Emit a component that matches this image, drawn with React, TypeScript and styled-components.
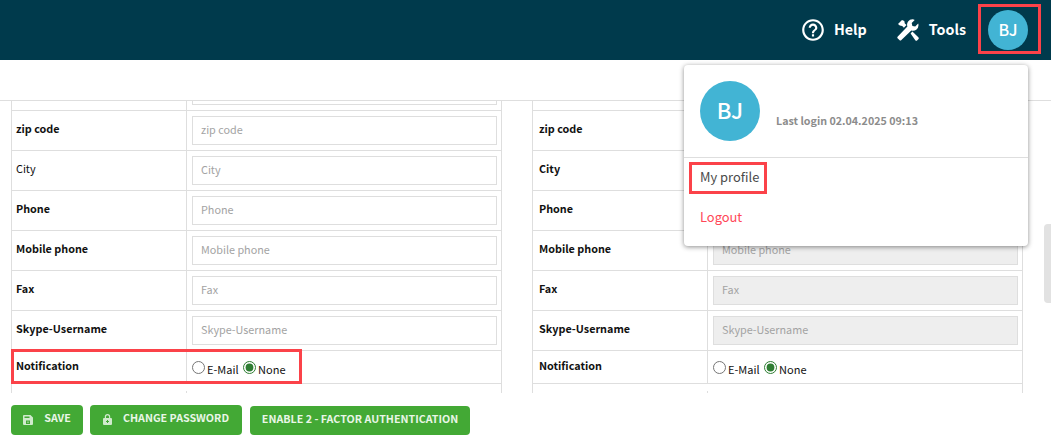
import React from 'react';
import styled, { createGlobalStyle } from 'styled-components';
import { MdHelpOutline } from 'react-icons/md';

const FONT = `"Noto Sans CJK JP", "Noto Sans", sans-serif`;

const Global = createGlobalStyle`
  html, body { margin: 0; padding: 0; background: #fff; }
  body { font-family: ${FONT}; color: #111; overflow: hidden; }
  * { box-sizing: border-box; }
`;

const Page = styled.div`
  position: relative;
  width: 1051px;
  height: 444px;
  display: flex;
  flex-direction: column;
  overflow: hidden;
`;

const Header = styled.header`
  height: 60px;
  flex: none;
  background: #003a4c;
  display: flex;
  align-items: center;
  justify-content: flex-end;
  padding-right: 23px;
`;

const NavItem = styled.a<{ $mr: number; $gap: number }>`
  display: flex;
  align-items: center;
  gap: ${p => p.$gap}px;
  margin-right: ${p => p.$mr}px;
  color: #fff;
  font-size: 14.3px;
  font-weight: 700;
  line-height: 20px;
  & > span { position: relative; top: -1px; }
`;

const Avatar = styled.div<{ $size: number; $font: number; $lift: number }>`
  width: ${p => p.$size}px;
  height: ${p => p.$size}px;
  flex: none;
  border-radius: 50%;
  background: #42b4d4;
  color: #fff;
  font-size: ${p => p.$font}px;
  font-weight: 500;
  padding-bottom: ${p => p.$lift}px;
  display: flex;
  align-items: center;
  justify-content: center;
`;

const SubBar = styled.div`
  height: 41px;
  flex: none;
  border-bottom: 1px solid #dedede;
`;

const Scroller = styled.div`
  height: 292px;
  flex: none;
  overflow: hidden;
  display: flex;
  padding-left: 11px;
`;

const Table = styled.div<{ $ml: number }>`
  width: 491px;
  margin-left: ${p => p.$ml}px;
  margin-top: -30px;
  flex: none;
  display: grid;
  grid-template-columns: 175px 1fr;
  grid-auto-rows: 40px;
  border-left: 1px solid #dedede;
  border-right: 1px solid #dedede;
  align-self: flex-start;
`;

const Label = styled.div<{ $bold?: boolean; $pad: number; $h: number; $inset: number }>`
  height: ${p => p.$h}px;
  border-bottom: 1px solid #dedede;
  border-right: 1px solid #dedede;
  padding: ${p => p.$pad}px 4px 0 ${p => p.$inset}px;
  font-size: 10.8px;
  line-height: 18px;
  font-weight: ${p => (p.$bold ? 700 : 400)};
  white-space: nowrap;
`;

const Cell = styled.div<{ $short?: boolean }>`
  height: ${p => (p.$short ? 33 : 40)}px;
  border-bottom: 1px solid #dedede;
  padding: 5px 4px 0 5px;
  display: flex;
  align-items: ${p => (p.$short ? 'center' : 'flex-start')};
`;

const Field = styled.input`
  width: 100%;
  height: 29px;
  border: 1px solid #dedede;
  background: #fff;
  padding: 0 7px 3px 8px;
  font-family: ${FONT};
  font-size: 10.8px;
  color: #111;
  outline: none;
  &::placeholder { color: #a3a3a3; opacity: 1; }
  &:disabled { background: #eeeeee; }
`;

const RadioGroup = styled.div`
  display: flex;
  align-items: center;
  font-size: 11px;
  line-height: 18px;
  padding-bottom: 1px;
`;

const RadioLabel = styled.label`
  display: flex;
  align-items: center;
  margin-right: 4.5px;
`;

const Radio = styled.input`
  width: 13px;
  height: 13px;
  margin: 0 2px 3px 0;
  accent-color: #2e7d32;
`;

const Footer = styled.footer`
  flex: 1;
  display: flex;
  align-items: flex-start;
  padding: 12px 0 0 11px;
  background: #fff;
`;

const Button = styled.button<{ $width: number; $ml?: number; $mt?: number }>`
  width: ${p => p.$width}px;
  height: ${p => 30 - (p.$mt ?? 0)}px;
  margin-left: ${p => p.$ml ?? 0}px;
  margin-top: ${p => p.$mt ?? 0}px;
  background: #43a935;
  border: none;
  border-radius: 4px;
  color: #e9f6e7;
  font-family: ${FONT};
  font-size: 10.7px;
  font-weight: 700;
  display: flex;
  align-items: center;
  justify-content: center;
  gap: 11px;
  padding: 0 0 5px;
  white-space: nowrap;
  & > svg { position: relative; top: 2px; opacity: 0.85; }
`;

const Menu = styled.div`
  position: absolute;
  left: 684px;
  top: 65px;
  width: 344px;
  height: 181px;
  background: #fff;
  border-radius: 4px;
  box-shadow: 0 1px 5px rgba(0, 0, 0, 0.45);
  color: #444;
`;

const MenuHead = styled.div`
  height: 93px;
  padding: 16px 16px 0;
  display: flex;
  border-bottom: 1px solid #dedede;
`;

const LastLogin = styled.div`
  margin: 31px 0 0 16px;
  font-size: 10.7px;
  line-height: 18px;
  font-weight: 700;
  color: #8c8c8c;
`;

const MenuItem = styled.div<{ $danger?: boolean }>`
  height: 40px;
  padding: 0 16px 3px;
  display: flex;
  align-items: center;
  font-size: 12.9px;
  color: ${p => (p.$danger ? '#ff4757' : '#4a4a4a')};
`;

const Highlight = styled.div<{ $x: number; $y: number; $w: number; $h: number }>`
  position: absolute;
  left: ${p => p.$x}px;
  top: ${p => p.$y}px;
  width: ${p => p.$w}px;
  height: ${p => p.$h}px;
  border: 3px solid #fb4249;
  pointer-events: none;
`;

const ScrollThumb = styled.div`
  position: absolute;
  right: 0;
  top: 224px;
  width: 7px;
  height: 79px;
  border-radius: 4px 0 0 4px;
  background: #e2e2e2;
`;

const ToolsIcon = () => (
  <svg width="22" height="22" viewBox="0 0 22 22">
    <path fill="currentColor" d="M15.6 0.3a5.4 5.4 0 0 0-5.2 7.2L0.8 17.4a1.4 1.4 0 0 0 0 2l1.6 1.6a1.4 1.4 0 0 0 2 0l9.9-9.6a5.4 5.4 0 0 0 7.2-5.2 5.4 5.4 0 0 0-.3-1.6l-3 3-2.8-.7-.7-2.8 3-3a5.4 5.4 0 0 0-2.1-.8Z" />
    <path fill="currentColor" d="M1 5 5 1l2.3 1 .5 2.4 1.7 1.7-2.6 2.6L5.2 7l-2.4-.5Z" />
    <path fill="currentColor" d="M13.6 14.4l1.8-1.8 5.9 5.7a1.4 1.4 0 0 1 0 2l-1 1a1.4 1.4 0 0 1-2 0Z" />
  </svg>
);

const SaveIcon = () => (
  <svg width="10" height="10" viewBox="0 0 10 10">
    <path fill="currentColor" fillRule="evenodd" d="M1 0h6.5L10 2.5V9a1 1 0 0 1-1 1H1a1 1 0 0 1-1-1V1a1 1 0 0 1 1-1ZM1.5 1.5v1.5h5V1.5ZM3 5.5V9h4V5.5ZM5.5 6.5v1.5h-1V6.5Z" />
  </svg>
);

const LockIcon = () => (
  <svg width="9" height="11" viewBox="0 0 9 11">
    <path fill="currentColor" fillRule="evenodd" d="M1.8 4V2.7a2.7 2.7 0 0 1 5.4 0V4H8a1 1 0 0 1 1 1v5a1 1 0 0 1-1 1H1a1 1 0 0 1-1-1V5a1 1 0 0 1 1-1ZM3 4h3V2.7a1.5 1.5 0 0 0-3 0ZM4 6v1H3v1h1v1h1V8h1V7H5V6Z" />
  </svg>
);

const rows: { label: string; bold: boolean }[] = [
  { label: 'Street', bold: true },
  { label: 'zip code', bold: true },
  { label: 'City', bold: false },
  { label: 'Phone', bold: true },
  { label: 'Mobile phone', bold: true },
  { label: 'Fax', bold: true },
  { label: 'Skype-Username', bold: true },
];

const FormTable: React.FC<{ ml: number; inset: number; disabled?: boolean; cityBold?: boolean }> = ({ ml, inset, disabled, cityBold }) => (
  <Table $ml={ml}>
    {rows.map(r => (
      <React.Fragment key={r.label}>
        <Label $inset={inset} $h={40} $pad={8} $bold={r.bold || (cityBold && r.label === 'City')}>{r.label}</Label>
        <Cell><Field placeholder={r.label} disabled={disabled} /></Cell>
      </React.Fragment>
    ))}
    <Label $inset={inset} $h={33} $pad={5} $bold>Notification</Label>
    <Cell $short>
      <RadioGroup>
        <RadioLabel><Radio type="radio" name={`n${ml}`} />E-Mail</RadioLabel>
        <RadioLabel><Radio type="radio" name={`n${ml}`} defaultChecked />None</RadioLabel>
      </RadioGroup>
    </Cell>
    <Label $inset={inset} $h={40} $pad={3} $bold>Available languages and currency</Label>
    <Cell />
  </Table>
);

export default function App() {
  return (
    <Page>
      <Global />
      <Header>
        <NavItem $mr={30} $gap={8}><MdHelpOutline size={26} /><span>Help</span></NavItem>
        <NavItem $mr={22} $gap={10}><ToolsIcon /><span>Tools</span></NavItem>
        <Avatar $size={40} $font={16} $lift={2}>BJ</Avatar>
      </Header>
      <SubBar />
      <Scroller>
        <FormTable ml={0} inset={4} />
        <FormTable ml={30} inset={6} disabled cityBold />
      </Scroller>
      <Footer>
        <Button $width={72}><SaveIcon />SAVE</Button>
        <Button $width={152} $ml={7}><LockIcon />CHANGE PASSWORD</Button>
        <Button $width={220} $ml={8} $mt={1}>ENABLE 2 - FACTOR AUTHENTICATION</Button>
      </Footer>
      <Menu>
        <MenuHead>
          <Avatar $size={60} $font={22} $lift={4}>BJ</Avatar>
          <LastLogin>Last login 02.04.2025 09:13</LastLogin>
        </MenuHead>
        <MenuItem>My profile</MenuItem>
        <MenuItem $danger>Logout</MenuItem>
      </Menu>
      <ScrollThumb />
      <Highlight $x={978} $y={4} $w={63} $h={50} />
      <Highlight $x={11} $y={349} $w={291} $h={35} />
      <Highlight $x={689} $y={162} $w={78} $h={32} />
    </Page>
  );
}
